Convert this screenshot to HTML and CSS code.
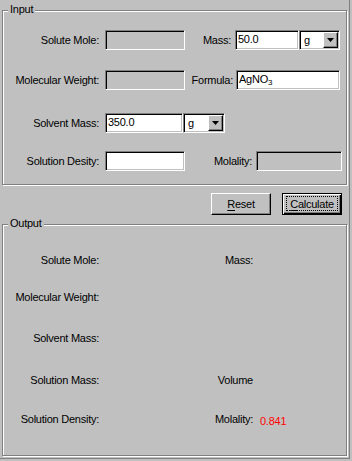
FILE: index.html
```html
<!DOCTYPE html>
<html>
  <head>
    <title>Molality Calculator</title>
    <link rel="stylesheet" href="styles.css">
  </head>
  <body>
    <div class="frame">
      <div class="group group-input">
        <span class="group-title">Input</span>
        <div class="input-rows">
          <div class="row">
            <span class="label-left">Solute Mole:</span>
            <div class="field field-off w80"></div>
            <span class="label-right label-mass">Mass:</span>
            <div class="field w64">50.0</div>
            <div class="choice w41">
              <span class="choice-text">g</span>
              <span class="choice-btn"><svg width="7" height="4" viewBox="0 0 7 4"><polygon points="0,0 7,0 3.5,4" fill="#000"/></svg></span>
            </div>
          </div>

          <div class="row">
            <span class="label-left">Molecular Weight:</span>
            <div class="field field-off w80"></div>
            <span class="label-right label-formula">Formula:</span>
            <div class="field w104">AgNO<sub>3</sub></div>
          </div>

          <div class="row">
            <span class="label-left">Solvent Mass:</span>
            <div class="field w78">350.0</div>
            <div class="choice w42">
              <span class="choice-text">g</span>
              <span class="choice-btn"><svg width="7" height="4" viewBox="0 0 7 4"><polygon points="0,0 7,0 3.5,4" fill="#000"/></svg></span>
            </div>
          </div>

          <div class="row">
            <span class="label-left">Solution Desity:</span>
            <div class="field w80"></div>
            <span class="label-right label-molality">Molality:</span>
            <div class="field field-off w86"></div>
          </div>
        </div>
      </div>

      <div class="actions">
        <button class="btn"><u>R</u>eset</button>
        <button class="btn btn-default"><span class="focus"><u>C</u>alculate</span></button>
      </div>

      <div class="group group-output">
        <span class="group-title">Output</span>
        <div class="output-rows">
          <div class="row">
            <span class="label-left">Solute Mole:</span>
            <span class="label-out">Mass:</span>
          </div>
          <div class="row">
            <span class="label-left">Molecular Weight:</span>
          </div>
          <div class="row">
            <span class="label-left">Solvent Mass:</span>
          </div>
          <div class="row">
            <span class="label-left">Solution Mass:</span>
            <span class="label-out">Volume</span>
          </div>
          <div class="row">
            <span class="label-left">Solution Density:</span>
            <span class="label-out">Molality:</span>
            <span class="value">0.841</span>
          </div>
        </div>
      </div>
    </div>
  </body>
</html>
```

FILE: styles.css
```css
body {
  margin: 0;
  background: #c0c0c0;
  font-family: "Liberation Sans", Arial, sans-serif;
  font-size: 11px;
  letter-spacing: -0.25px;
  color: #000;
}
.frame {
  width: 349px;
  height: 448px;
  padding-top: 10px;
  border-right: 1px solid #808080;
  border-bottom: 1px solid #808080;
}
.group {
  position: relative;
  margin-left: 2px;
  width: 345px;
  box-sizing: border-box;
  border: 1px solid #808080;
  box-shadow: 1px 1px 0 #fff, inset 1px 1px 0 #fff;
}
.group-input {
  height: 175px;
}
.group-output {
  height: 232px;
  margin-top: 9px;
}
.group-title {
  position: absolute;
  top: -8px;
  left: 5px;
  padding: 0 2px;
  line-height: 13px;
  background: #c0c0c0;
}
.input-rows {
  display: grid;
  grid-template-rows: 40px 43px 38px 20px;
  padding-top: 19px;
}
.output-rows {
  display: grid;
  grid-template-rows: 37px 41px 42px 39px 20px;
  padding-top: 25px;
}
.row {
  display: flex;
  align-items: center;
  height: 20px;
}
.label-left {
  width: 95px;
  margin-left: 1px;
  margin-right: 6px;
  text-align: right;
  white-space: nowrap;
}
.label-right {
  text-align: right;
  white-space: nowrap;
}
.label-mass {
  width: 46px;
  margin-right: 4px;
}
.label-formula {
  width: 48px;
  margin-right: 3px;
}
.label-molality {
  width: 67px;
  margin-right: 4px;
}
.output-rows .label-left {
  margin-right: 0;
}
.label-out {
  width: 154px;
  text-align: right;
}
.value {
  margin-left: 7px;
  margin-top: 3px;
  color: #ff0000;
}

.field {
  height: 20px;
  box-sizing: border-box;
  padding: 0 1px 0 2px;
  line-height: 16px;
  background: #fff;
  border: 1px solid;
  border-color: #808080 #fff #fff #808080;
  box-shadow: inset 1px 1px 0 #000, inset -1px -1px 0 #c0c0c0;
  white-space: nowrap;
}
.field sub {
  font-size: 8px;
  vertical-align: -2px;
  line-height: 0;
}
.field-off {
  background: #c0c0c0;
}
.w64 { width: 64px; }
.w78 { width: 78px; }
.w80 { width: 80px; }
.w86 { width: 86px; }
.w104 { width: 104px; }
.w41 { width: 41px; }
.w42 { width: 42px; }

.choice {
  display: flex;
  align-items: center;
  height: 20px;
  box-sizing: border-box;
  padding: 1px;
  background: #fff;
  border: 1px solid;
  border-color: #808080 #fff #fff #808080;
  box-shadow: inset 1px 1px 0 #000, inset -1px -1px 0 #c0c0c0;
}
.choice-text {
  flex: 1;
  padding-left: 3px;
  line-height: 16px;
}
.choice-btn {
  display: flex;
  align-items: center;
  justify-content: center;
  width: 15px;
  height: 16px;
  box-sizing: border-box;
  background: #c0c0c0;
  border: 1px solid;
  border-color: #fff #000 #000 #fff;
  box-shadow: inset -1px -1px 0 #808080;
}

.actions {
  display: flex;
  justify-content: flex-end;
  gap: 11px;
  margin-top: 8px;
  margin-right: 7px;
}
.btn {
  width: 60px;
  height: 22px;
  padding: 0;
  font: inherit;
  letter-spacing: inherit;
  color: #000;
  background: #c0c0c0;
  border: 1px solid;
  border-color: #fff #000 #000 #fff;
  box-shadow: inset -1px -1px 0 #808080;
}
.btn u {
  text-underline-offset: 2px;
}
.btn-default {
  display: flex;
  padding: 2px 3px 3px 3px;
  border-color: #000;
  box-shadow: inset 1px 1px 0 #fff, inset -1px -1px 0 #000, inset -2px -2px 0 #808080;
}
.focus {
  flex: 1;
  display: flex;
  align-items: center;
  justify-content: center;
  border: 1px dotted #000;
}
```
